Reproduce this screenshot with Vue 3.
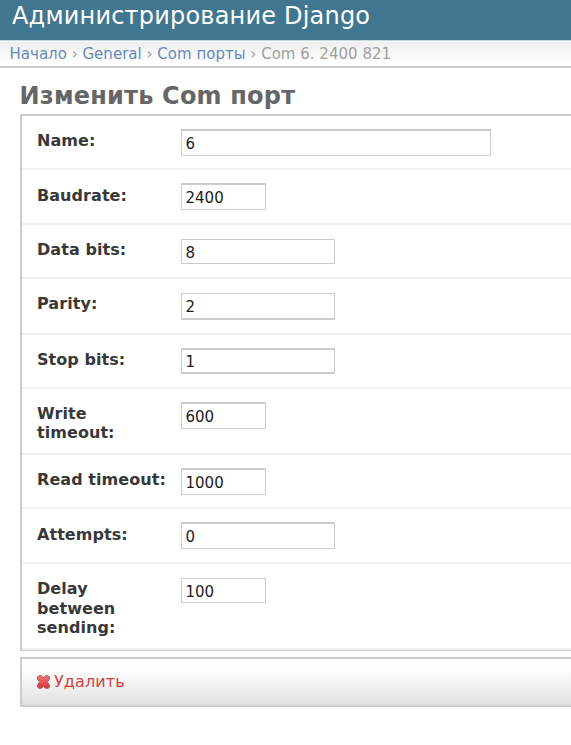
<script setup>
const rows = [
  { label: 'Name:', value: '6', size: 'wide', height: 54, labelTop: 15, pad: 13, box: 27, top: 2, bottom: 1 },
  { label: 'Baudrate:', value: '2400', size: 'short', height: 55, labelTop: 16, pad: 13, box: 27, top: 2, bottom: 1 },
  { label: 'Data bits:', value: '8', size: 'medium', height: 54, labelTop: 15, pad: 14, box: 25, top: 1, bottom: 1 },
  { label: 'Parity:', value: '2', size: 'medium', height: 56, labelTop: 15, pad: 14, box: 27, top: 1, bottom: 2 },
  { label: 'Stop bits:', value: '1', size: 'medium', height: 54, labelTop: 15, pad: 13, box: 26, top: 2, bottom: 2 },
  { label: 'Write timeout:', value: '600', size: 'short', height: 66, labelTop: 15, pad: 13, box: 27, top: 2, bottom: 1, tight: true },
  { label: 'Read timeout:', value: '1000', size: 'short', height: 54, labelTop: 15, pad: 13, box: 27, top: 2, bottom: 1 },
  { label: 'Attempts:', value: '0', size: 'medium', height: 55, labelTop: 16, pad: 13, box: 27, top: 2, bottom: 1 },
  { label: 'Delay between sending:', value: '100', size: 'short', height: 86, labelTop: 15, pad: 14, box: 25, top: 1, bottom: 1 },
]
</script>

<template>
  <div class="page">
    <header class="header">Администрирование Django</header>
    <nav class="breadcrumbs">
      <a>Начало</a> › <a>General</a> › <a>Com порты</a> › Com 6. 2400 821
    </nav>
    <main class="content">
      <h1>Изменить Com порт</h1>
      <form class="module">
        <div v-for="row in rows" :key="row.label" class="row" :style="{ height: row.height + 'px' }">
          <label :class="{ tight: row.tight }" :style="{ marginTop: row.labelTop + 'px' }">{{ row.label }}</label>
          <input
            type="text"
            :class="row.size"
            :value="row.value"
            :style="{ height: row.box + 'px', marginTop: row.pad + 'px', borderTopWidth: row.top + 'px', borderBottomWidth: row.bottom + 'px' }"
          />
        </div>
      </form>
      <div class="submit-row">
        <a class="delete">
          <svg width="13" height="14" viewBox="0 0 13 14">
            <defs>
              <linearGradient id="cross" x1="0" y1="0" x2="0" y2="1">
                <stop offset="0" stop-color="#f07472" />
                <stop offset="1" stop-color="#d93636" />
              </linearGradient>
            </defs>
            <path
              d="M1.8 .7H4.2L6.5 2.6 8.8 .7H11.2L12.4 2V4.3L10.4 7 12.4 9.7V12L11.2 13.3H8.8L6.5 11.4 4.2 13.3H1.8L.6 12V9.7L2.6 7 .6 4.3V2Z"
              fill="url(#cross)" stroke="#a9605e" stroke-width="1" stroke-linejoin="round"
            />
          </svg>
          <span>Удалить</span>
        </a>
      </div>
    </main>
  </div>
</template>

<style>
body {
  background: #fff;
  overflow: hidden;
}
</style>

<style scoped>
.page {
  height: 745px;
  overflow: hidden;
  font-family: "DejaVu Sans", Verdana, sans-serif;
  color: #383838;
}
.header {
  box-sizing: border-box;
  height: 40px;
  padding: 2px 0 0 12px;
  background: #417690;
  color: #fff;
  font-size: 24px;
  line-height: 28px;
  letter-spacing: 0.2px;
  white-space: nowrap;
}
.breadcrumbs {
  box-sizing: border-box;
  height: 28px;
  padding: 2px 0 0 9.5px;
  border-top: 1px solid #c8d6dd;
  border-bottom: 2px solid #ccc;
  background: linear-gradient(#fff 0 1px, #eee 1px, #fff 22px);
  color: #a0a0a0;
  font-size: 15px;
  line-height: 22px;
  letter-spacing: 0.015px;
  white-space: nowrap;
}
.breadcrumbs a {
  color: #668abc;
}
.content {
  padding: 14px 0 0 20px;
}
h1 {
  height: 32px;
  margin: 0 0 0 -0.5px;
  color: #666;
  font-size: 24px;
  line-height: 28px;
  letter-spacing: 0.2px;
  white-space: nowrap;
}
.module {
  border: 2px solid #ccc;
  border-right: 0;
  border-bottom-width: 1px;
}
.row {
  box-sizing: border-box;
  display: flex;
  align-items: flex-start;
  padding-left: 15px;
  border-bottom: 2px solid #f0f0f0;
}
label {
  width: 130px;
  margin-right: 14px;
  font-size: 16px;
  font-weight: bold;
  line-height: 19.5px;
  letter-spacing: 0.06px;
}
label.tight {
  line-height: 19px;
}
input {
  box-sizing: border-box;
  margin: 0;
  padding: 2px 4px 0 3.5px;
  border: 1px solid #ccc;
  border-radius: 0;
  outline: none;
  background: #fff;
  color: #1c1c1c;
  font-family: inherit;
  font-size: 15px;
}
.wide {
  width: 310px;
}
.medium {
  width: 154px;
}
.short {
  width: 85px;
}
.submit-row {
  box-sizing: border-box;
  height: 50px;
  margin-top: 6px;
  padding: 12px 0 0 15px;
  border: 2px solid #ccc;
  border-right: 0;
  background: linear-gradient(#fff 20%, #e0e0e0);
}
.delete {
  display: flex;
  align-items: center;
  gap: 4px;
  color: #d24444;
  font-size: 16px;
  line-height: 22px;
  letter-spacing: 0.12px;
}
</style>
